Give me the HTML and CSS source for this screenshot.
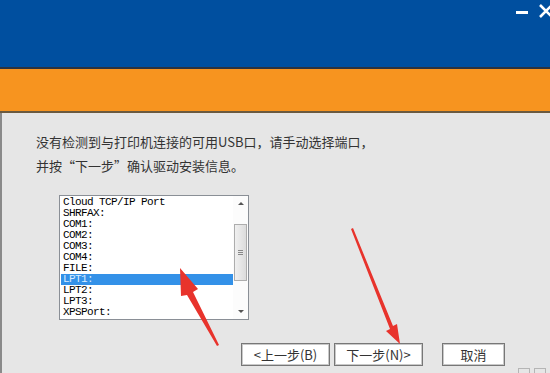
FILE: index.html
```html
<!DOCTYPE html>
<html lang="zh-CN">
<head>
  <meta charset="UTF-8" />
  <title>安装驱动</title>
  <link rel="stylesheet" href="styles.css">
</head>
<body>
  <div class="window">
    <div class="title-bar">
      <svg class="win-controls" width="40" height="24" viewBox="0 0 40 24">
        <rect x="6" y="11" width="12" height="3" fill="#fff"/>
        <path d="M30 5 L42 17 M42 5 L30 17" stroke="#fff" stroke-width="2.6"/>
      </svg>
    </div>
    <div class="band"></div>

    <div class="content">
      <p class="hint">没有检测到与打印机连接的可用USB口，请手动选择端口，<br>并按“下一步”确认驱动安装信息。</p>

      <div class="listbox">
        <ul class="ports">
          <li>Cloud TCP/IP Port</li>
          <li>SHRFAX:</li>
          <li>COM1:</li>
          <li>COM2:</li>
          <li>COM3:</li>
          <li>COM4:</li>
          <li>FILE:</li>
          <li class="selected">LPT1:</li>
          <li>LPT2:</li>
          <li>LPT3:</li>
          <li>XPSPort:</li>
        </ul>
        <div class="scrollbar">
          <span class="arrow up"></span>
          <div class="track">
            <div class="thumb"><span class="grip"></span></div>
          </div>
          <span class="arrow down"></span>
        </div>
      </div>

      <div class="buttons">
        <button class="btn">&lt;上一步(B)</button>
        <button class="btn">下一步(N)&gt;</button>
        <button class="btn cancel">取消</button>
      </div>
    </div>

    <!-- красные стрелки поверх скриншота -->
    <svg class="arrows" width="550" height="373" viewBox="0 0 550 373">
      <polygon points="217,346 219,345 193,292 198,289 180,268 181,296 187,295" fill="#e8332c"/>
      <polygon points="351,229 353,228 393,326 397,324 400,344 386,331 390,329" fill="#e8332c"/>
    </svg>

    <div class="grip-icons">
      <span></span><span></span>
    </div>
  </div>
</body>
</html>
```

FILE: styles.css
```css
body {
  margin: 0;
  font-family: "Noto Sans CJK SC", "Noto Sans", sans-serif;
  background: #e6e6e6;
}

.window {
  position: relative;
  width: 550px;
  height: 373px;
  overflow: hidden;
  background: #e6e6e6;
}

.title-bar {
  height: 67px;
  background: #004f9f;
  border-bottom: 2px solid #2b3340;
  display: flex;
  justify-content: flex-end;
}

.win-controls {
  margin-top: 0;
}

.band {
  height: 42px;
  background: #f7941f;
  border-bottom: 2px solid #6b5a40;
}

.content {
  border-left: 2px solid #8a8a8a;
  height: 260px;
  padding: 17px 0 0 34px;
}

.hint {
  margin: 0;
  font-size: 13px;
  line-height: 24px;
  color: #333;
}

.listbox {
  margin: 17px 0 0 23px;
  width: 188px;
  height: 123px;
  border: 1px solid #8a8f96;
  background: #fff;
  display: flex;
}

.ports {
  list-style: none;
  margin: 0;
  padding: 1px 0 0 1px;
  flex: 1;
  font-family: "Liberation Mono", monospace;
  font-size: 11px;
  letter-spacing: -0.6px;
  color: #000;
}

.ports li {
  height: 11px;
  line-height: 11px;
  padding-left: 2px;
}

.ports li.selected {
  background: #3391e8;
  color: #d8ecff;
}

.scrollbar {
  width: 15px;
  display: flex;
  flex-direction: column;
  align-items: center;
  background: #fcfcfc;
}

.arrow {
  width: 0;
  height: 0;
  border-left: 3px solid transparent;
  border-right: 3px solid transparent;
  margin: 6px 0;
}

.arrow.up {
  border-bottom: 3px solid #555;
}

.arrow.down {
  border-top: 3px solid #555;
}

.track {
  flex: 1;
  width: 100%;
  padding-top: 13px;
}

.thumb {
  width: 11px;
  height: 55px;
  margin: 0 auto;
  border: 1px solid #adadad;
  background: linear-gradient(to right, #f0f0f0, #dcdcdc);
  display: flex;
  align-items: center;
  justify-content: center;
}

.grip {
  width: 5px;
  height: 5px;
  border-top: 1px solid #888;
  border-bottom: 1px solid #888;
  box-sizing: border-box;
  background: linear-gradient(#888, #888) center / 100% 1px no-repeat;
}

.buttons {
  display: flex;
  margin: 23px 0 0 205px;
}

.btn {
  height: 23px;
  width: 89px;
  margin-right: 4px;
  background: #fff;
  border: 1px solid #777;
  box-shadow: inset 0 0 0 1px #c9c9c9;
  font-family: "Noto Sans CJK SC", sans-serif;
  font-size: 13px;
  color: #333;
  padding: 0;
  line-height: 20px;
}

.btn.cancel {
  width: 63px;
  margin-left: 15px;
}

.arrows {
  position: absolute;
  top: 0;
  left: 0;
  pointer-events: none;
}

.grip-icons {
  position: absolute;
  left: 518px;
  top: 368px;
  display: flex;
  gap: 4px;
}

.grip-icons span {
  width: 10px;
  height: 10px;
  border: 1px solid #b5b5b5;
}
```
